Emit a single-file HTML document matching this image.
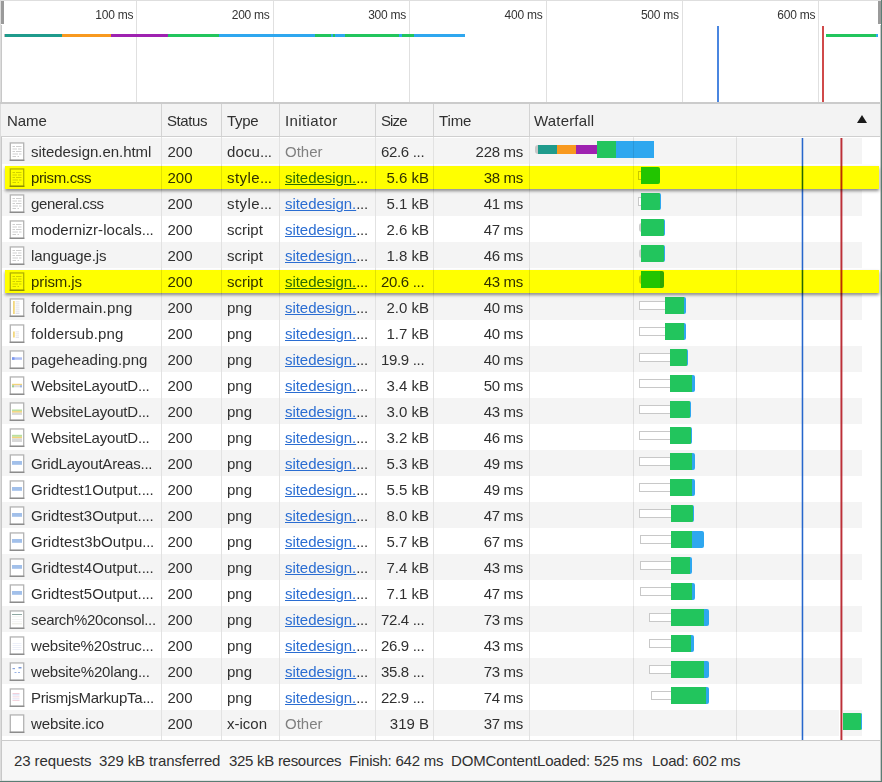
<!DOCTYPE html>
<html><head><meta charset="utf-8"><style>
*{box-sizing:border-box;margin:0;padding:0}
html,body{width:882px;height:782px;overflow:hidden;background:#fff}
body{position:relative;font-family:"Liberation Sans",sans-serif;color:#303030;}
.a{position:absolute}
.t{position:absolute;white-space:nowrap;font-size:15px;line-height:18px}
.tk{position:absolute;white-space:nowrap;font-size:12px;line-height:14px;color:#333;text-align:right;letter-spacing:-0.25px}
.lnk{color:#2a6dd2;text-decoration:underline;text-underline-offset:1px}
.oth{color:#808080}
.ic{position:absolute;width:16px;height:20px}
.hl{position:absolute;background:#ffff00;mix-blend-mode:multiply;box-shadow:0 2px 3px rgba(0,0,0,.45)}
</style></head><body>

<div class="a" style="left:0;top:0;width:882px;height:1px;background:#dedede"></div>
<div class="a" style="left:0;top:0;width:1px;height:782px;background:#dcdcdc"></div>
<div class="a" style="left:1px;top:25px;width:1px;height:757px;background:#c8c8c8"></div>
<div class="a" style="left:1px;top:1px;width:3px;height:23px;background:#9a9a9a"></div>
<div class="a" style="left:878px;top:1px;width:3px;height:23px;background:#9a9a9a"></div>
<div class="a" style="left:880px;top:25px;width:1px;height:757px;background:#c8c8c8"></div>
<div class="a" style="left:881px;top:0;width:1px;height:782px;background:#5b7d74"></div>
<div class="a" style="left:136.4px;top:1px;width:1px;height:101px;background:#e0e0e0"></div>
<div class="tk" style="left:76.4px;top:8px;width:56.8px">100 ms</div>
<div class="a" style="left:272.8px;top:1px;width:1px;height:101px;background:#e0e0e0"></div>
<div class="tk" style="left:212.8px;top:8px;width:56.8px">200 ms</div>
<div class="a" style="left:409.2px;top:1px;width:1px;height:101px;background:#e0e0e0"></div>
<div class="tk" style="left:349.2px;top:8px;width:56.8px">300 ms</div>
<div class="a" style="left:545.6px;top:1px;width:1px;height:101px;background:#e0e0e0"></div>
<div class="tk" style="left:485.6px;top:8px;width:56.8px">400 ms</div>
<div class="a" style="left:682.0px;top:1px;width:1px;height:101px;background:#e0e0e0"></div>
<div class="tk" style="left:622.0px;top:8px;width:56.8px">500 ms</div>
<div class="a" style="left:818.4px;top:1px;width:1px;height:101px;background:#e0e0e0"></div>
<div class="tk" style="left:758.4px;top:8px;width:56.8px">600 ms</div>
<div class="a" style="left:4px;top:34px;width:1px;height:3px;background:#bbb"></div>
<div class="a" style="left:5px;top:34px;width:57px;height:3px;background:#1f9b8c"></div>
<div class="a" style="left:62px;top:34px;width:49px;height:3px;background:#f8991f"></div>
<div class="a" style="left:111px;top:34px;width:57px;height:3px;background:#9e22b0"></div>
<div class="a" style="left:168px;top:34px;width:51px;height:3px;background:#22c55d"></div>
<div class="a" style="left:219px;top:34px;width:96px;height:3px;background:#2ea7ef"></div>
<div class="a" style="left:315px;top:34px;width:16px;height:3px;background:#22c55d"></div>
<div class="a" style="left:331px;top:34px;width:2px;height:3px;background:#2ea7ef"></div>
<div class="a" style="left:333px;top:34px;width:2px;height:3px;background:#22c55d"></div>
<div class="a" style="left:335px;top:34px;width:10px;height:3px;background:#2ea7ef"></div>
<div class="a" style="left:345px;top:34px;width:54px;height:3px;background:#22c55d"></div>
<div class="a" style="left:399px;top:34px;width:3px;height:3px;background:#2ea7ef"></div>
<div class="a" style="left:402px;top:34px;width:12px;height:3px;background:#22c55d"></div>
<div class="a" style="left:414px;top:34px;width:51px;height:3px;background:#2ea7ef"></div>
<div class="a" style="left:826px;top:34px;width:50px;height:3px;background:#22c55d"></div>
<div class="a" style="left:876px;top:34px;width:2px;height:3px;background:#2ea7ef"></div>
<div class="a" style="left:717px;top:26px;width:2px;height:76px;background:#4a86e0"></div>
<div class="a" style="left:822px;top:26px;width:2px;height:76px;background:#d04a4a"></div>
<div class="a" style="left:0;top:102px;width:881px;height:2px;background:#cbcbcb"></div>
<div class="a" style="left:1px;top:104px;width:879px;height:32px;background:#f3f3f3"></div>
<div class="a" style="left:1px;top:136px;width:879px;height:1px;background:#cfcfcf"></div>
<div class="t" style="left:7px;top:112px;letter-spacing:-0.039px;">Name</div>
<div class="t" style="left:167px;top:112px;letter-spacing:-0.406px;">Status</div>
<div class="t" style="left:227px;top:112px;letter-spacing:-0.339px;">Type</div>
<div class="t" style="left:285px;top:112px;letter-spacing:0.375px;">Initiator</div>
<div class="t" style="left:381px;top:112px;letter-spacing:-0.891px;">Size</div>
<div class="t" style="left:439px;top:112px;letter-spacing:-0.122px;">Time</div>
<div class="t" style="left:534px;top:112px;letter-spacing:0.172px;">Waterfall</div>
<svg class="a" style="left:856px;top:114px" width="12" height="10"><path d="M1 9 L6 1 L11 9 Z" fill="#1a1a1a"/></svg>
<div class="a" style="left:2px;top:137px;width:878px;height:603px;background:#fff"></div>
<div class="a" style="left:2px;top:138px;width:860px;height:26px;background:#f4f4f4"></div>
<div class="a" style="left:2px;top:190px;width:860px;height:26px;background:#f4f4f4"></div>
<div class="a" style="left:2px;top:242px;width:860px;height:26px;background:#f4f4f4"></div>
<div class="a" style="left:2px;top:294px;width:860px;height:26px;background:#f4f4f4"></div>
<div class="a" style="left:2px;top:346px;width:860px;height:26px;background:#f4f4f4"></div>
<div class="a" style="left:2px;top:398px;width:860px;height:26px;background:#f4f4f4"></div>
<div class="a" style="left:2px;top:450px;width:860px;height:26px;background:#f4f4f4"></div>
<div class="a" style="left:2px;top:502px;width:860px;height:26px;background:#f4f4f4"></div>
<div class="a" style="left:2px;top:554px;width:860px;height:26px;background:#f4f4f4"></div>
<div class="a" style="left:2px;top:606px;width:860px;height:26px;background:#f4f4f4"></div>
<div class="a" style="left:2px;top:658px;width:860px;height:26px;background:#f4f4f4"></div>
<div class="a" style="left:2px;top:710px;width:860px;height:26px;background:#f4f4f4"></div>
<div class="a" style="left:161px;top:104px;width:1px;height:32px;background:#d3d3d3"></div>
<div class="a" style="left:161px;top:137px;width:1px;height:603px;background:#e2e2e2"></div>
<div class="a" style="left:221px;top:104px;width:1px;height:32px;background:#d3d3d3"></div>
<div class="a" style="left:221px;top:137px;width:1px;height:603px;background:#e2e2e2"></div>
<div class="a" style="left:279px;top:104px;width:1px;height:32px;background:#d3d3d3"></div>
<div class="a" style="left:279px;top:137px;width:1px;height:603px;background:#e2e2e2"></div>
<div class="a" style="left:375px;top:104px;width:1px;height:32px;background:#d3d3d3"></div>
<div class="a" style="left:375px;top:137px;width:1px;height:603px;background:#e2e2e2"></div>
<div class="a" style="left:433px;top:104px;width:1px;height:32px;background:#d3d3d3"></div>
<div class="a" style="left:433px;top:137px;width:1px;height:603px;background:#e2e2e2"></div>
<div class="a" style="left:529px;top:104px;width:1px;height:32px;background:#d3d3d3"></div>
<div class="a" style="left:529px;top:137px;width:1px;height:603px;background:#e2e2e2"></div>
<svg class="ic" style="left:9px;top:142px" width="16" height="20"><rect x="1.3" y="0.95" width="13.4" height="17.4" fill="#fff" stroke="#b3b3b3" stroke-width="1.3"/><rect x="0.65" y="17.6" width="14.7" height="1.3" fill="#888"/><rect x="3.5" y="4" width="2.5" height="1" fill="#cfcfcf"/><rect x="7" y="4" width="5.5" height="1" fill="#cfcfcf"/><rect x="3.5" y="6.5" width="4.5" height="1" fill="#cfcfcf"/><rect x="9" y="6.5" width="3.5" height="1" fill="#cfcfcf"/><rect x="3.5" y="9" width="2.5" height="1" fill="#cfcfcf"/><rect x="7" y="9" width="5.5" height="1" fill="#cfcfcf"/><rect x="3.5" y="11.5" width="5.5" height="1" fill="#cfcfcf"/><rect x="10" y="11.5" width="2.5" height="1" fill="#cfcfcf"/><rect x="3.5" y="14" width="3.5" height="1" fill="#cfcfcf"/><rect x="8.5" y="14" width="1.5" height="1" fill="#cfcfcf"/></svg>
<div class="t" style="left:31px;top:143px;"><span style="letter-spacing:-0.029px;">sitedesign.en.html</span></div>
<div class="t" style="left:167.5px;top:143px">200</div>
<div class="t" style="left:227px;top:143px;"><span style="letter-spacing:0.138px;">docu</span><span style="letter-spacing:-0.3px">...</span></div>
<div class="t oth" style="left:285px;top:143px">Other</div>
<div class="t" style="left:381px;top:143px;"><span style="letter-spacing:-0.338px;">62.6 </span><span style="letter-spacing:-0.3px">...</span></div>
<div class="t" style="left:433px;top:143px;width:90px;text-align:right;letter-spacing:-0.3px">228 ms</div>
<div class="a" style="left:535px;top:145px;width:5px;height:9px;background:#c8c8c8;border-radius:3px 0 0 3px"></div>
<div class="a" style="left:538px;top:145px;width:19px;height:9px;background:#1f9b8c"></div>
<div class="a" style="left:557px;top:145px;width:19px;height:9px;background:#f8991f"></div>
<div class="a" style="left:576px;top:145px;width:21px;height:9px;background:#9e22b0"></div>
<div class="a" style="left:597px;top:141px;width:57px;height:17px;border-radius:0;overflow:hidden"><div class="a" style="left:0px;top:0;width:19px;height:17px;background:#22c55d"></div><div class="a" style="left:19px;top:0;width:38px;height:17px;background:#2ea7ef"></div></div>
<svg class="ic" style="left:9px;top:168px" width="16" height="20"><rect x="1.3" y="0.95" width="13.4" height="17.4" fill="#fff" stroke="#b3b3b3" stroke-width="1.3"/><rect x="0.65" y="17.6" width="14.7" height="1.3" fill="#888"/><rect x="3.5" y="4" width="2.5" height="1" fill="#cfcfcf"/><rect x="7" y="4" width="5.5" height="1" fill="#cfcfcf"/><rect x="3.5" y="6.5" width="4.5" height="1" fill="#cfcfcf"/><rect x="9" y="6.5" width="3.5" height="1" fill="#cfcfcf"/><rect x="3.5" y="9" width="2.5" height="1" fill="#cfcfcf"/><rect x="7" y="9" width="5.5" height="1" fill="#cfcfcf"/><rect x="3.5" y="11.5" width="5.5" height="1" fill="#cfcfcf"/><rect x="10" y="11.5" width="2.5" height="1" fill="#cfcfcf"/><rect x="3.5" y="14" width="3.5" height="1" fill="#cfcfcf"/><rect x="8.5" y="14" width="1.5" height="1" fill="#cfcfcf"/></svg>
<div class="t" style="left:31px;top:169px;"><span style="letter-spacing:-0.360px;">prism.css</span></div>
<div class="t" style="left:167.5px;top:169px">200</div>
<div class="t" style="left:227px;top:169px;"><span style="letter-spacing:0.448px;">style</span><span style="letter-spacing:-0.3px">...</span></div>
<div class="t" style="left:285px;top:169px;"><span class="lnk" style="letter-spacing:-0.05px">sitedesign.</span><span style="letter-spacing:-0.3px">...</span></div>
<div class="t" style="left:375px;top:169px;width:54px;text-align:right">5.6 kB</div>
<div class="t" style="left:433px;top:169px;width:90px;text-align:right;letter-spacing:-0.3px">38 ms</div>
<div class="a" style="left:638px;top:171px;width:4px;height:9px;background:#fff;border:1px solid #c8c8c8;"></div>
<div class="a" style="left:641px;top:167px;width:19px;height:17px;border-radius:0 2px 2px 0;overflow:hidden"><div class="a" style="left:0px;top:0;width:19px;height:17px;background:#22c55d"></div></div>
<svg class="ic" style="left:9px;top:194px" width="16" height="20"><rect x="1.3" y="0.95" width="13.4" height="17.4" fill="#fff" stroke="#b3b3b3" stroke-width="1.3"/><rect x="0.65" y="17.6" width="14.7" height="1.3" fill="#888"/><rect x="3.5" y="4" width="2.5" height="1" fill="#cfcfcf"/><rect x="7" y="4" width="5.5" height="1" fill="#cfcfcf"/><rect x="3.5" y="6.5" width="4.5" height="1" fill="#cfcfcf"/><rect x="9" y="6.5" width="3.5" height="1" fill="#cfcfcf"/><rect x="3.5" y="9" width="2.5" height="1" fill="#cfcfcf"/><rect x="7" y="9" width="5.5" height="1" fill="#cfcfcf"/><rect x="3.5" y="11.5" width="5.5" height="1" fill="#cfcfcf"/><rect x="10" y="11.5" width="2.5" height="1" fill="#cfcfcf"/><rect x="3.5" y="14" width="3.5" height="1" fill="#cfcfcf"/><rect x="8.5" y="14" width="1.5" height="1" fill="#cfcfcf"/></svg>
<div class="t" style="left:31px;top:195px;"><span style="letter-spacing:-0.365px;">general.css</span></div>
<div class="t" style="left:167.5px;top:195px">200</div>
<div class="t" style="left:227px;top:195px;"><span style="letter-spacing:0.448px;">style</span><span style="letter-spacing:-0.3px">...</span></div>
<div class="t" style="left:285px;top:195px;"><span class="lnk" style="letter-spacing:-0.05px">sitedesign.</span><span style="letter-spacing:-0.3px">...</span></div>
<div class="t" style="left:375px;top:195px;width:54px;text-align:right">5.1 kB</div>
<div class="t" style="left:433px;top:195px;width:90px;text-align:right;letter-spacing:-0.3px">41 ms</div>
<div class="a" style="left:638px;top:197px;width:4px;height:9px;background:#fff;border:1px solid #c8c8c8;"></div>
<div class="a" style="left:641px;top:193px;width:20px;height:17px;border-radius:0 2px 2px 0;overflow:hidden"><div class="a" style="left:0px;top:0;width:19px;height:17px;background:#22c55d"></div><div class="a" style="left:19px;top:0;width:1px;height:17px;background:#2ea7ef"></div></div>
<svg class="ic" style="left:9px;top:220px" width="16" height="20"><rect x="1.3" y="0.95" width="13.4" height="17.4" fill="#fff" stroke="#b3b3b3" stroke-width="1.3"/><rect x="0.65" y="17.6" width="14.7" height="1.3" fill="#888"/><rect x="3.5" y="4" width="2.5" height="1" fill="#cfcfcf"/><rect x="7" y="4" width="5.5" height="1" fill="#cfcfcf"/><rect x="3.5" y="6.5" width="4.5" height="1" fill="#cfcfcf"/><rect x="9" y="6.5" width="3.5" height="1" fill="#cfcfcf"/><rect x="3.5" y="9" width="2.5" height="1" fill="#cfcfcf"/><rect x="7" y="9" width="5.5" height="1" fill="#cfcfcf"/><rect x="3.5" y="11.5" width="5.5" height="1" fill="#cfcfcf"/><rect x="10" y="11.5" width="2.5" height="1" fill="#cfcfcf"/><rect x="3.5" y="14" width="3.5" height="1" fill="#cfcfcf"/><rect x="8.5" y="14" width="1.5" height="1" fill="#cfcfcf"/></svg>
<div class="t" style="left:31px;top:221px;"><span style="letter-spacing:0.046px;">modernizr-locals</span><span style="letter-spacing:-0.3px">...</span></div>
<div class="t" style="left:167.5px;top:221px">200</div>
<div class="t" style="left:227px;top:221px;"><span style="">script</span></div>
<div class="t" style="left:285px;top:221px;"><span class="lnk" style="letter-spacing:-0.05px">sitedesign.</span><span style="letter-spacing:-0.3px">...</span></div>
<div class="t" style="left:375px;top:221px;width:54px;text-align:right">2.6 kB</div>
<div class="t" style="left:433px;top:221px;width:90px;text-align:right;letter-spacing:-0.3px">47 ms</div>
<div class="a" style="left:639px;top:223px;width:4px;height:9px;background:#ccc;border-radius:3px 0 0 3px"></div>
<div class="a" style="left:641px;top:219px;width:24px;height:17px;border-radius:0 2px 2px 0;overflow:hidden"><div class="a" style="left:0px;top:0;width:23px;height:17px;background:#22c55d"></div><div class="a" style="left:23px;top:0;width:1px;height:17px;background:#2ea7ef"></div></div>
<svg class="ic" style="left:9px;top:246px" width="16" height="20"><rect x="1.3" y="0.95" width="13.4" height="17.4" fill="#fff" stroke="#b3b3b3" stroke-width="1.3"/><rect x="0.65" y="17.6" width="14.7" height="1.3" fill="#888"/><rect x="3.5" y="4" width="2.5" height="1" fill="#cfcfcf"/><rect x="7" y="4" width="5.5" height="1" fill="#cfcfcf"/><rect x="3.5" y="6.5" width="4.5" height="1" fill="#cfcfcf"/><rect x="9" y="6.5" width="3.5" height="1" fill="#cfcfcf"/><rect x="3.5" y="9" width="2.5" height="1" fill="#cfcfcf"/><rect x="7" y="9" width="5.5" height="1" fill="#cfcfcf"/><rect x="3.5" y="11.5" width="5.5" height="1" fill="#cfcfcf"/><rect x="10" y="11.5" width="2.5" height="1" fill="#cfcfcf"/><rect x="3.5" y="14" width="3.5" height="1" fill="#cfcfcf"/><rect x="8.5" y="14" width="1.5" height="1" fill="#cfcfcf"/></svg>
<div class="t" style="left:31px;top:247px;"><span style="letter-spacing:-0.121px;">language.js</span></div>
<div class="t" style="left:167.5px;top:247px">200</div>
<div class="t" style="left:227px;top:247px;"><span style="">script</span></div>
<div class="t" style="left:285px;top:247px;"><span class="lnk" style="letter-spacing:-0.05px">sitedesign.</span><span style="letter-spacing:-0.3px">...</span></div>
<div class="t" style="left:375px;top:247px;width:54px;text-align:right">1.8 kB</div>
<div class="t" style="left:433px;top:247px;width:90px;text-align:right;letter-spacing:-0.3px">46 ms</div>
<div class="a" style="left:639px;top:249px;width:4px;height:9px;background:#ccc;border-radius:3px 0 0 3px"></div>
<div class="a" style="left:641px;top:245px;width:24px;height:17px;border-radius:0 2px 2px 0;overflow:hidden"><div class="a" style="left:0px;top:0;width:23px;height:17px;background:#22c55d"></div><div class="a" style="left:23px;top:0;width:1px;height:17px;background:#2ea7ef"></div></div>
<svg class="ic" style="left:9px;top:272px" width="16" height="20"><rect x="1.3" y="0.95" width="13.4" height="17.4" fill="#fff" stroke="#b3b3b3" stroke-width="1.3"/><rect x="0.65" y="17.6" width="14.7" height="1.3" fill="#888"/><rect x="3.5" y="4" width="2.5" height="1" fill="#cfcfcf"/><rect x="7" y="4" width="5.5" height="1" fill="#cfcfcf"/><rect x="3.5" y="6.5" width="4.5" height="1" fill="#cfcfcf"/><rect x="9" y="6.5" width="3.5" height="1" fill="#cfcfcf"/><rect x="3.5" y="9" width="2.5" height="1" fill="#cfcfcf"/><rect x="7" y="9" width="5.5" height="1" fill="#cfcfcf"/><rect x="3.5" y="11.5" width="5.5" height="1" fill="#cfcfcf"/><rect x="10" y="11.5" width="2.5" height="1" fill="#cfcfcf"/><rect x="3.5" y="14" width="3.5" height="1" fill="#cfcfcf"/><rect x="8.5" y="14" width="1.5" height="1" fill="#cfcfcf"/></svg>
<div class="t" style="left:31px;top:273px;"><span style="letter-spacing:-0.084px;">prism.js</span></div>
<div class="t" style="left:167.5px;top:273px">200</div>
<div class="t" style="left:227px;top:273px;"><span style="">script</span></div>
<div class="t" style="left:285px;top:273px;"><span class="lnk" style="letter-spacing:-0.05px">sitedesign.</span><span style="letter-spacing:-0.3px">...</span></div>
<div class="t" style="left:381px;top:273px;"><span style="letter-spacing:-0.338px;">20.6 </span><span style="letter-spacing:-0.3px">...</span></div>
<div class="t" style="left:433px;top:273px;width:90px;text-align:right;letter-spacing:-0.3px">43 ms</div>
<div class="a" style="left:639px;top:275px;width:4px;height:9px;background:#ccc;border-radius:3px 0 0 3px"></div>
<div class="a" style="left:641px;top:271px;width:23px;height:17px;border-radius:0 2px 2px 0;overflow:hidden"><div class="a" style="left:0px;top:0;width:19px;height:17px;background:#22c55d"></div><div class="a" style="left:19px;top:0;width:4px;height:17px;background:#2ea7ef"></div></div>
<svg class="ic" style="left:9px;top:298px" width="16" height="20"><rect x="1.3" y="0.95" width="13.4" height="17.4" fill="#fff" stroke="#b3b3b3" stroke-width="1.3"/><rect x="0.65" y="17.6" width="14.7" height="1.3" fill="#888"/><rect x="4" y="3" width="1.8" height="13" fill="#f3d77f"/><rect x="6.5" y="3.5" width="4" height="0.8" fill="#d8d8e0"/><rect x="6.5" y="5.5" width="4" height="0.8" fill="#d8d8e0"/><rect x="6.5" y="7.5" width="4" height="0.8" fill="#d8d8e0"/><rect x="6.5" y="9.5" width="4" height="0.8" fill="#d8d8e0"/><rect x="6.5" y="11.5" width="4" height="0.8" fill="#d8d8e0"/><rect x="6.5" y="13.5" width="4" height="0.8" fill="#d8d8e0"/><rect x="6.5" y="15" width="4" height="0.8" fill="#d8d8e0"/></svg>
<div class="t" style="left:31px;top:299px;"><span style="letter-spacing:0.154px;">foldermain.png</span></div>
<div class="t" style="left:167.5px;top:299px">200</div>
<div class="t" style="left:227px;top:299px;"><span style="">png</span></div>
<div class="t" style="left:285px;top:299px;"><span class="lnk" style="letter-spacing:-0.05px">sitedesign.</span><span style="letter-spacing:-0.3px">...</span></div>
<div class="t" style="left:375px;top:299px;width:54px;text-align:right">2.0 kB</div>
<div class="t" style="left:433px;top:299px;width:90px;text-align:right;letter-spacing:-0.3px">40 ms</div>
<div class="a" style="left:639px;top:301px;width:27px;height:9px;background:#fff;border:1px solid #c8c8c8;"></div>
<div class="a" style="left:665px;top:297px;width:21px;height:17px;border-radius:0 2px 2px 0;overflow:hidden"><div class="a" style="left:0px;top:0;width:19px;height:17px;background:#22c55d"></div><div class="a" style="left:19px;top:0;width:2px;height:17px;background:#2ea7ef"></div></div>
<svg class="ic" style="left:9px;top:324px" width="16" height="20"><rect x="1.3" y="0.95" width="13.4" height="17.4" fill="#fff" stroke="#b3b3b3" stroke-width="1.3"/><rect x="0.65" y="17.6" width="14.7" height="1.3" fill="#888"/><rect x="4" y="7.5" width="1.8" height="6" fill="#f3d77f"/><rect x="6.5" y="7.5" width="3.5" height="0.8" fill="#dcdce4"/><rect x="6.5" y="9.5" width="3.5" height="0.8" fill="#dcdce4"/><rect x="6.5" y="11.5" width="3.5" height="0.8" fill="#dcdce4"/><rect x="6.5" y="13" width="3.5" height="0.8" fill="#dcdce4"/></svg>
<div class="t" style="left:31px;top:325px;"><span style="letter-spacing:0.121px;">foldersub.png</span></div>
<div class="t" style="left:167.5px;top:325px">200</div>
<div class="t" style="left:227px;top:325px;"><span style="">png</span></div>
<div class="t" style="left:285px;top:325px;"><span class="lnk" style="letter-spacing:-0.05px">sitedesign.</span><span style="letter-spacing:-0.3px">...</span></div>
<div class="t" style="left:375px;top:325px;width:54px;text-align:right">1.7 kB</div>
<div class="t" style="left:433px;top:325px;width:90px;text-align:right;letter-spacing:-0.3px">40 ms</div>
<div class="a" style="left:639px;top:327px;width:27px;height:9px;background:#fff;border:1px solid #c8c8c8;"></div>
<div class="a" style="left:665px;top:323px;width:21px;height:17px;border-radius:0 2px 2px 0;overflow:hidden"><div class="a" style="left:0px;top:0;width:19px;height:17px;background:#22c55d"></div><div class="a" style="left:19px;top:0;width:2px;height:17px;background:#2ea7ef"></div></div>
<svg class="ic" style="left:9px;top:350px" width="16" height="20"><rect x="1.3" y="0.95" width="13.4" height="17.4" fill="#fff" stroke="#b3b3b3" stroke-width="1.3"/><rect x="0.65" y="17.6" width="14.7" height="1.3" fill="#888"/><rect x="3" y="7.3" width="10" height="2.5" fill="#b0c0f4"/><rect x="3" y="7.3" width="2.5" height="2.5" fill="#7b96ee"/></svg>
<div class="t" style="left:31px;top:351px;"><span style="letter-spacing:0.029px;">pageheading.png</span></div>
<div class="t" style="left:167.5px;top:351px">200</div>
<div class="t" style="left:227px;top:351px;"><span style="">png</span></div>
<div class="t" style="left:285px;top:351px;"><span class="lnk" style="letter-spacing:-0.05px">sitedesign.</span><span style="letter-spacing:-0.3px">...</span></div>
<div class="t" style="left:381px;top:351px;"><span style="letter-spacing:-0.338px;">19.9 </span><span style="letter-spacing:-0.3px">...</span></div>
<div class="t" style="left:433px;top:351px;width:90px;text-align:right;letter-spacing:-0.3px">40 ms</div>
<div class="a" style="left:639px;top:353px;width:32px;height:9px;background:#fff;border:1px solid #c8c8c8;"></div>
<div class="a" style="left:670px;top:349px;width:18px;height:17px;border-radius:0 2px 2px 0;overflow:hidden"><div class="a" style="left:0px;top:0;width:17px;height:17px;background:#22c55d"></div><div class="a" style="left:17px;top:0;width:1px;height:17px;background:#2ea7ef"></div></div>
<svg class="ic" style="left:9px;top:376px" width="16" height="20"><rect x="1.3" y="0.95" width="13.4" height="17.4" fill="#fff" stroke="#b3b3b3" stroke-width="1.3"/><rect x="0.65" y="17.6" width="14.7" height="1.3" fill="#888"/><rect x="3" y="7.8" width="10" height="1.5" fill="#f3d37a"/><rect x="3" y="9.3" width="10" height="2" fill="#dcdcdc"/><rect x="3" y="9.3" width="2" height="2" fill="#9fd08f"/><rect x="11" y="9.3" width="2" height="2" fill="#9fb8e6"/></svg>
<div class="t" style="left:31px;top:377px;"><span style="letter-spacing:-0.208px;">WebsiteLayoutD</span><span style="letter-spacing:-0.3px">...</span></div>
<div class="t" style="left:167.5px;top:377px">200</div>
<div class="t" style="left:227px;top:377px;"><span style="">png</span></div>
<div class="t" style="left:285px;top:377px;"><span class="lnk" style="letter-spacing:-0.05px">sitedesign.</span><span style="letter-spacing:-0.3px">...</span></div>
<div class="t" style="left:375px;top:377px;width:54px;text-align:right">3.4 kB</div>
<div class="t" style="left:433px;top:377px;width:90px;text-align:right;letter-spacing:-0.3px">50 ms</div>
<div class="a" style="left:639px;top:379px;width:32px;height:9px;background:#fff;border:1px solid #c8c8c8;"></div>
<div class="a" style="left:670px;top:375px;width:25px;height:17px;border-radius:0 2px 2px 0;overflow:hidden"><div class="a" style="left:0px;top:0;width:22px;height:17px;background:#22c55d"></div><div class="a" style="left:22px;top:0;width:3px;height:17px;background:#2ea7ef"></div></div>
<svg class="ic" style="left:9px;top:402px" width="16" height="20"><rect x="1.3" y="0.95" width="13.4" height="17.4" fill="#fff" stroke="#b3b3b3" stroke-width="1.3"/><rect x="0.65" y="17.6" width="14.7" height="1.3" fill="#888"/><rect x="3" y="7.5" width="10" height="1.6" fill="#b8e0a0"/><rect x="3" y="9.1" width="10" height="1.6" fill="#f3d37a"/><rect x="3" y="10.7" width="10" height="2.2" fill="#d8d8d8"/></svg>
<div class="t" style="left:31px;top:403px;"><span style="letter-spacing:-0.208px;">WebsiteLayoutD</span><span style="letter-spacing:-0.3px">...</span></div>
<div class="t" style="left:167.5px;top:403px">200</div>
<div class="t" style="left:227px;top:403px;"><span style="">png</span></div>
<div class="t" style="left:285px;top:403px;"><span class="lnk" style="letter-spacing:-0.05px">sitedesign.</span><span style="letter-spacing:-0.3px">...</span></div>
<div class="t" style="left:375px;top:403px;width:54px;text-align:right">3.0 kB</div>
<div class="t" style="left:433px;top:403px;width:90px;text-align:right;letter-spacing:-0.3px">43 ms</div>
<div class="a" style="left:639px;top:405px;width:32px;height:9px;background:#fff;border:1px solid #c8c8c8;"></div>
<div class="a" style="left:670px;top:401px;width:21px;height:17px;border-radius:0 2px 2px 0;overflow:hidden"><div class="a" style="left:0px;top:0;width:20px;height:17px;background:#22c55d"></div><div class="a" style="left:20px;top:0;width:1px;height:17px;background:#2ea7ef"></div></div>
<svg class="ic" style="left:9px;top:428px" width="16" height="20"><rect x="1.3" y="0.95" width="13.4" height="17.4" fill="#fff" stroke="#b3b3b3" stroke-width="1.3"/><rect x="0.65" y="17.6" width="14.7" height="1.3" fill="#888"/><rect x="3" y="6.8" width="10" height="2" fill="#b8e0a0"/><rect x="3" y="8.8" width="10" height="1.6" fill="#f3d37a"/><rect x="3" y="10.4" width="10" height="3.6" fill="#d8d8d8"/></svg>
<div class="t" style="left:31px;top:429px;"><span style="letter-spacing:-0.208px;">WebsiteLayoutD</span><span style="letter-spacing:-0.3px">...</span></div>
<div class="t" style="left:167.5px;top:429px">200</div>
<div class="t" style="left:227px;top:429px;"><span style="">png</span></div>
<div class="t" style="left:285px;top:429px;"><span class="lnk" style="letter-spacing:-0.05px">sitedesign.</span><span style="letter-spacing:-0.3px">...</span></div>
<div class="t" style="left:375px;top:429px;width:54px;text-align:right">3.2 kB</div>
<div class="t" style="left:433px;top:429px;width:90px;text-align:right;letter-spacing:-0.3px">46 ms</div>
<div class="a" style="left:639px;top:431px;width:32px;height:9px;background:#fff;border:1px solid #c8c8c8;"></div>
<div class="a" style="left:670px;top:427px;width:22px;height:17px;border-radius:0 2px 2px 0;overflow:hidden"><div class="a" style="left:0px;top:0;width:21px;height:17px;background:#22c55d"></div><div class="a" style="left:21px;top:0;width:1px;height:17px;background:#2ea7ef"></div></div>
<svg class="ic" style="left:9px;top:454px" width="16" height="20"><rect x="1.3" y="0.95" width="13.4" height="17.4" fill="#fff" stroke="#b3b3b3" stroke-width="1.3"/><rect x="0.65" y="17.6" width="14.7" height="1.3" fill="#888"/><rect x="3" y="7" width="10" height="3.8" fill="#a2c0ea"/></svg>
<div class="t" style="left:31px;top:455px;"><span style="letter-spacing:-0.200px;">GridLayoutAreas</span><span style="letter-spacing:-0.3px">...</span></div>
<div class="t" style="left:167.5px;top:455px">200</div>
<div class="t" style="left:227px;top:455px;"><span style="">png</span></div>
<div class="t" style="left:285px;top:455px;"><span class="lnk" style="letter-spacing:-0.05px">sitedesign.</span><span style="letter-spacing:-0.3px">...</span></div>
<div class="t" style="left:375px;top:455px;width:54px;text-align:right">5.3 kB</div>
<div class="t" style="left:433px;top:455px;width:90px;text-align:right;letter-spacing:-0.3px">49 ms</div>
<div class="a" style="left:639px;top:457px;width:32px;height:9px;background:#fff;border:1px solid #c8c8c8;"></div>
<div class="a" style="left:670px;top:453px;width:25px;height:17px;border-radius:0 2px 2px 0;overflow:hidden"><div class="a" style="left:0px;top:0;width:22px;height:17px;background:#22c55d"></div><div class="a" style="left:22px;top:0;width:3px;height:17px;background:#2ea7ef"></div></div>
<svg class="ic" style="left:9px;top:480px" width="16" height="20"><rect x="1.3" y="0.95" width="13.4" height="17.4" fill="#fff" stroke="#b3b3b3" stroke-width="1.3"/><rect x="0.65" y="17.6" width="14.7" height="1.3" fill="#888"/><rect x="3" y="7" width="10" height="3.8" fill="#a2c0ea"/></svg>
<div class="t" style="left:31px;top:481px;"><span style="letter-spacing:0.037px;">Gridtest1Output.</span><span style="letter-spacing:-0.3px">...</span></div>
<div class="t" style="left:167.5px;top:481px">200</div>
<div class="t" style="left:227px;top:481px;"><span style="">png</span></div>
<div class="t" style="left:285px;top:481px;"><span class="lnk" style="letter-spacing:-0.05px">sitedesign.</span><span style="letter-spacing:-0.3px">...</span></div>
<div class="t" style="left:375px;top:481px;width:54px;text-align:right">5.5 kB</div>
<div class="t" style="left:433px;top:481px;width:90px;text-align:right;letter-spacing:-0.3px">49 ms</div>
<div class="a" style="left:639px;top:483px;width:32px;height:9px;background:#fff;border:1px solid #c8c8c8;"></div>
<div class="a" style="left:670px;top:479px;width:25px;height:17px;border-radius:0 2px 2px 0;overflow:hidden"><div class="a" style="left:0px;top:0;width:22px;height:17px;background:#22c55d"></div><div class="a" style="left:22px;top:0;width:3px;height:17px;background:#2ea7ef"></div></div>
<svg class="ic" style="left:9px;top:506px" width="16" height="20"><rect x="1.3" y="0.95" width="13.4" height="17.4" fill="#fff" stroke="#b3b3b3" stroke-width="1.3"/><rect x="0.65" y="17.6" width="14.7" height="1.3" fill="#888"/><rect x="3" y="7" width="10" height="3.8" fill="#a2c0ea"/></svg>
<div class="t" style="left:31px;top:507px;"><span style="letter-spacing:0.037px;">Gridtest3Output.</span><span style="letter-spacing:-0.3px">...</span></div>
<div class="t" style="left:167.5px;top:507px">200</div>
<div class="t" style="left:227px;top:507px;"><span style="">png</span></div>
<div class="t" style="left:285px;top:507px;"><span class="lnk" style="letter-spacing:-0.05px">sitedesign.</span><span style="letter-spacing:-0.3px">...</span></div>
<div class="t" style="left:375px;top:507px;width:54px;text-align:right">8.0 kB</div>
<div class="t" style="left:433px;top:507px;width:90px;text-align:right;letter-spacing:-0.3px">47 ms</div>
<div class="a" style="left:639px;top:509px;width:33px;height:9px;background:#fff;border:1px solid #c8c8c8;"></div>
<div class="a" style="left:671px;top:505px;width:23px;height:17px;border-radius:0 2px 2px 0;overflow:hidden"><div class="a" style="left:0px;top:0;width:22px;height:17px;background:#22c55d"></div><div class="a" style="left:22px;top:0;width:1px;height:17px;background:#2ea7ef"></div></div>
<svg class="ic" style="left:9px;top:532px" width="16" height="20"><rect x="1.3" y="0.95" width="13.4" height="17.4" fill="#fff" stroke="#b3b3b3" stroke-width="1.3"/><rect x="0.65" y="17.6" width="14.7" height="1.3" fill="#888"/><rect x="3" y="7" width="10" height="3.8" fill="#a2c0ea"/></svg>
<div class="t" style="left:31px;top:533px;"><span style="letter-spacing:0.086px;">Gridtest3bOutpu</span><span style="letter-spacing:-0.3px">...</span></div>
<div class="t" style="left:167.5px;top:533px">200</div>
<div class="t" style="left:227px;top:533px;"><span style="">png</span></div>
<div class="t" style="left:285px;top:533px;"><span class="lnk" style="letter-spacing:-0.05px">sitedesign.</span><span style="letter-spacing:-0.3px">...</span></div>
<div class="t" style="left:375px;top:533px;width:54px;text-align:right">5.7 kB</div>
<div class="t" style="left:433px;top:533px;width:90px;text-align:right;letter-spacing:-0.3px">67 ms</div>
<div class="a" style="left:640px;top:535px;width:32px;height:9px;background:#fff;border:1px solid #c8c8c8;"></div>
<div class="a" style="left:671px;top:531px;width:33px;height:17px;border-radius:0 2px 2px 0;overflow:hidden"><div class="a" style="left:0px;top:0;width:21px;height:17px;background:#22c55d"></div><div class="a" style="left:21px;top:0;width:12px;height:17px;background:#2ea7ef"></div></div>
<svg class="ic" style="left:9px;top:558px" width="16" height="20"><rect x="1.3" y="0.95" width="13.4" height="17.4" fill="#fff" stroke="#b3b3b3" stroke-width="1.3"/><rect x="0.65" y="17.6" width="14.7" height="1.3" fill="#888"/><rect x="3" y="7" width="10" height="3.8" fill="#a2c0ea"/></svg>
<div class="t" style="left:31px;top:559px;"><span style="letter-spacing:0.037px;">Gridtest4Output.</span><span style="letter-spacing:-0.3px">...</span></div>
<div class="t" style="left:167.5px;top:559px">200</div>
<div class="t" style="left:227px;top:559px;"><span style="">png</span></div>
<div class="t" style="left:285px;top:559px;"><span class="lnk" style="letter-spacing:-0.05px">sitedesign.</span><span style="letter-spacing:-0.3px">...</span></div>
<div class="t" style="left:375px;top:559px;width:54px;text-align:right">7.4 kB</div>
<div class="t" style="left:433px;top:559px;width:90px;text-align:right;letter-spacing:-0.3px">43 ms</div>
<div class="a" style="left:640px;top:561px;width:32px;height:9px;background:#fff;border:1px solid #c8c8c8;"></div>
<div class="a" style="left:671px;top:557px;width:21px;height:17px;border-radius:0 2px 2px 0;overflow:hidden"><div class="a" style="left:0px;top:0;width:19px;height:17px;background:#22c55d"></div><div class="a" style="left:19px;top:0;width:2px;height:17px;background:#2ea7ef"></div></div>
<svg class="ic" style="left:9px;top:584px" width="16" height="20"><rect x="1.3" y="0.95" width="13.4" height="17.4" fill="#fff" stroke="#b3b3b3" stroke-width="1.3"/><rect x="0.65" y="17.6" width="14.7" height="1.3" fill="#888"/><rect x="3" y="7" width="10" height="3.8" fill="#a2c0ea"/></svg>
<div class="t" style="left:31px;top:585px;"><span style="letter-spacing:0.037px;">Gridtest5Output.</span><span style="letter-spacing:-0.3px">...</span></div>
<div class="t" style="left:167.5px;top:585px">200</div>
<div class="t" style="left:227px;top:585px;"><span style="">png</span></div>
<div class="t" style="left:285px;top:585px;"><span class="lnk" style="letter-spacing:-0.05px">sitedesign.</span><span style="letter-spacing:-0.3px">...</span></div>
<div class="t" style="left:375px;top:585px;width:54px;text-align:right">7.1 kB</div>
<div class="t" style="left:433px;top:585px;width:90px;text-align:right;letter-spacing:-0.3px">47 ms</div>
<div class="a" style="left:640px;top:587px;width:32px;height:9px;background:#fff;border:1px solid #c8c8c8;"></div>
<div class="a" style="left:671px;top:583px;width:24px;height:17px;border-radius:0 2px 2px 0;overflow:hidden"><div class="a" style="left:0px;top:0;width:21px;height:17px;background:#22c55d"></div><div class="a" style="left:21px;top:0;width:3px;height:17px;background:#2ea7ef"></div></div>
<svg class="ic" style="left:9px;top:610px" width="16" height="20"><rect x="1.3" y="0.95" width="13.4" height="17.4" fill="#fff" stroke="#b3b3b3" stroke-width="1.3"/><rect x="0.65" y="17.6" width="14.7" height="1.3" fill="#888"/><rect x="3" y="4" width="10" height="1" fill="#8fa8a3"/><rect x="3" y="6.5" width="10" height="0.6" fill="#ececec"/><rect x="3" y="9" width="10" height="0.6" fill="#ececec"/><rect x="3" y="11.5" width="10" height="0.6" fill="#ececec"/><rect x="3" y="13.5" width="10" height="0.7" fill="#e2e2d6"/></svg>
<div class="t" style="left:31px;top:611px;"><span style="letter-spacing:-0.349px;">search%20consol</span><span style="letter-spacing:-0.3px">...</span></div>
<div class="t" style="left:167.5px;top:611px">200</div>
<div class="t" style="left:227px;top:611px;"><span style="">png</span></div>
<div class="t" style="left:285px;top:611px;"><span class="lnk" style="letter-spacing:-0.05px">sitedesign.</span><span style="letter-spacing:-0.3px">...</span></div>
<div class="t" style="left:381px;top:611px;"><span style="letter-spacing:-0.338px;">72.4 </span><span style="letter-spacing:-0.3px">...</span></div>
<div class="t" style="left:433px;top:611px;width:90px;text-align:right;letter-spacing:-0.3px">73 ms</div>
<div class="a" style="left:649px;top:613px;width:23px;height:9px;background:#fff;border:1px solid #c8c8c8;"></div>
<div class="a" style="left:671px;top:609px;width:38px;height:17px;border-radius:0 2px 2px 0;overflow:hidden"><div class="a" style="left:0px;top:0;width:33px;height:17px;background:#22c55d"></div><div class="a" style="left:33px;top:0;width:5px;height:17px;background:#2ea7ef"></div></div>
<svg class="ic" style="left:9px;top:636px" width="16" height="20"><rect x="1.3" y="0.95" width="13.4" height="17.4" fill="#fff" stroke="#b3b3b3" stroke-width="1.3"/><rect x="0.65" y="17.6" width="14.7" height="1.3" fill="#888"/><rect x="3.5" y="7" width="9" height="0.7" fill="#e6eaf6"/><rect x="3.5" y="9" width="9" height="0.7" fill="#e6eaf6"/><rect x="3.5" y="11" width="9" height="0.7" fill="#e6eaf6"/><rect x="3.5" y="13" width="9" height="0.7" fill="#e6eaf6"/></svg>
<div class="t" style="left:31px;top:637px;"><span style="letter-spacing:-0.181px;">website%20struc</span><span style="letter-spacing:-0.3px">...</span></div>
<div class="t" style="left:167.5px;top:637px">200</div>
<div class="t" style="left:227px;top:637px;"><span style="">png</span></div>
<div class="t" style="left:285px;top:637px;"><span class="lnk" style="letter-spacing:-0.05px">sitedesign.</span><span style="letter-spacing:-0.3px">...</span></div>
<div class="t" style="left:381px;top:637px;"><span style="letter-spacing:-0.338px;">26.9 </span><span style="letter-spacing:-0.3px">...</span></div>
<div class="t" style="left:433px;top:637px;width:90px;text-align:right;letter-spacing:-0.3px">43 ms</div>
<div class="a" style="left:649px;top:639px;width:23px;height:9px;background:#fff;border:1px solid #c8c8c8;"></div>
<div class="a" style="left:671px;top:635px;width:23px;height:17px;border-radius:0 2px 2px 0;overflow:hidden"><div class="a" style="left:0px;top:0;width:20px;height:17px;background:#22c55d"></div><div class="a" style="left:20px;top:0;width:3px;height:17px;background:#2ea7ef"></div></div>
<svg class="ic" style="left:9px;top:662px" width="16" height="20"><rect x="1.3" y="0.95" width="13.4" height="17.4" fill="#fff" stroke="#b3b3b3" stroke-width="1.3"/><rect x="0.65" y="17.6" width="14.7" height="1.3" fill="#888"/><rect x="3.5" y="6" width="2.5" height="1.2" fill="#8aa6e0"/><rect x="9.5" y="5" width="3" height="1.5" fill="#7c9ad8"/><rect x="5.5" y="10" width="2" height="1" fill="#9ab2e4"/><rect x="9" y="10" width="2" height="1" fill="#9ab2e4"/></svg>
<div class="t" style="left:31px;top:663px;"><span style="letter-spacing:-0.162px;">website%20lang</span><span style="letter-spacing:-0.3px">...</span></div>
<div class="t" style="left:167.5px;top:663px">200</div>
<div class="t" style="left:227px;top:663px;"><span style="">png</span></div>
<div class="t" style="left:285px;top:663px;"><span class="lnk" style="letter-spacing:-0.05px">sitedesign.</span><span style="letter-spacing:-0.3px">...</span></div>
<div class="t" style="left:381px;top:663px;"><span style="letter-spacing:-0.338px;">35.8 </span><span style="letter-spacing:-0.3px">...</span></div>
<div class="t" style="left:433px;top:663px;width:90px;text-align:right;letter-spacing:-0.3px">73 ms</div>
<div class="a" style="left:649px;top:665px;width:23px;height:9px;background:#fff;border:1px solid #c8c8c8;"></div>
<div class="a" style="left:671px;top:661px;width:38px;height:17px;border-radius:0 2px 2px 0;overflow:hidden"><div class="a" style="left:0px;top:0;width:33px;height:17px;background:#22c55d"></div><div class="a" style="left:33px;top:0;width:5px;height:17px;background:#2ea7ef"></div></div>
<svg class="ic" style="left:9px;top:688px" width="16" height="20"><rect x="1.3" y="0.95" width="13.4" height="17.4" fill="#fff" stroke="#b3b3b3" stroke-width="1.3"/><rect x="0.65" y="17.6" width="14.7" height="1.3" fill="#888"/><rect x="3.5" y="5" width="7" height="0.8" fill="#f0c4d0"/><rect x="3.5" y="6.5" width="7" height="0.8" fill="#c4d0f0"/><rect x="3.5" y="8.5" width="7" height="0.8" fill="#f0ccd8"/><rect x="3.5" y="10.5" width="7" height="0.8" fill="#d8d8f0"/><rect x="3.5" y="12" width="7" height="0.8" fill="#f0c8d4"/></svg>
<div class="t" style="left:31px;top:689px;"><span style="letter-spacing:-0.243px;">PrismjsMarkupTa</span><span style="letter-spacing:-0.3px">...</span></div>
<div class="t" style="left:167.5px;top:689px">200</div>
<div class="t" style="left:227px;top:689px;"><span style="">png</span></div>
<div class="t" style="left:285px;top:689px;"><span class="lnk" style="letter-spacing:-0.05px">sitedesign.</span><span style="letter-spacing:-0.3px">...</span></div>
<div class="t" style="left:381px;top:689px;"><span style="letter-spacing:-0.338px;">22.9 </span><span style="letter-spacing:-0.3px">...</span></div>
<div class="t" style="left:433px;top:689px;width:90px;text-align:right;letter-spacing:-0.3px">74 ms</div>
<div class="a" style="left:651px;top:691px;width:21px;height:9px;background:#fff;border:1px solid #c8c8c8;"></div>
<div class="a" style="left:671px;top:687px;width:38px;height:17px;border-radius:0 2px 2px 0;overflow:hidden"><div class="a" style="left:0px;top:0;width:35px;height:17px;background:#22c55d"></div><div class="a" style="left:35px;top:0;width:3px;height:17px;background:#2ea7ef"></div></div>
<svg class="ic" style="left:9px;top:714px" width="16" height="20"><rect x="1.3" y="0.95" width="13.4" height="17.4" fill="#fff" stroke="#b3b3b3" stroke-width="1.3"/><rect x="0.65" y="17.6" width="14.7" height="1.3" fill="#888"/></svg>
<div class="t" style="left:31px;top:715px;"><span style="letter-spacing:-0.109px;">website.ico</span></div>
<div class="t" style="left:167.5px;top:715px">200</div>
<div class="t" style="left:227px;top:715px;"><span style="">x-icon</span></div>
<div class="t oth" style="left:285px;top:715px">Other</div>
<div class="t" style="left:375px;top:715px;width:54px;text-align:right">319 B</div>
<div class="t" style="left:433px;top:715px;width:90px;text-align:right;letter-spacing:-0.3px">37 ms</div>
<div class="a" style="left:843px;top:713px;width:19px;height:17px;border-radius:0 2px 2px 0;overflow:hidden"><div class="a" style="left:0px;top:0;width:19px;height:17px;background:#22c55d"></div><div class="a" style="left:18px;top:0;width:1px;height:17px;background:#2ea7ef"></div></div>
<div class="a" style="left:633px;top:137px;width:1px;height:603px;background:rgba(0,0,0,0.09)"></div>
<div class="a" style="left:736px;top:137px;width:1px;height:603px;background:rgba(0,0,0,0.09)"></div>
<div class="a" style="left:839px;top:710px;width:4px;height:26px;background:#fff"></div>
<div class="a" style="left:802px;top:138px;width:1px;height:602px;background:#2566cc"></div>
<div class="a" style="left:801px;top:138px;width:1px;height:602px;background:rgba(37,102,204,0.3)"></div>
<div class="a" style="left:803px;top:138px;width:1px;height:602px;background:rgba(37,102,204,0.25)"></div>
<div class="a" style="left:841px;top:138px;width:1px;height:602px;background:#bc2f37"></div>
<div class="a" style="left:840px;top:138px;width:1px;height:602px;background:rgba(188,47,55,0.55)"></div>
<div class="a" style="left:842px;top:138px;width:1px;height:602px;background:rgba(188,47,55,0.4)"></div>
<div class="hl" style="left:5px;top:166px;width:874px;height:23px"></div>
<div class="hl" style="left:5px;top:270px;width:874px;height:23px"></div>
<div class="a" style="left:1px;top:740px;width:880px;height:1px;background:#cbcbcb"></div>
<div class="a" style="left:2px;top:741px;width:878px;height:39px;background:#f7f7f7"></div>
<div class="a" style="left:2px;top:780px;width:878px;height:1px;background:#e2e2e2"></div>
<div class="a" style="left:0;top:781px;width:882px;height:1px;background:#5b7d74"></div>
<div class="t" style="left:14px;top:752px;letter-spacing:-0.091px;">23 requests</div>
<div class="t" style="left:99px;top:752px;letter-spacing:-0.114px;">329 kB transferred</div>
<div class="t" style="left:229px;top:752px;letter-spacing:-0.283px;">325 kB resources</div>
<div class="t" style="left:349px;top:752px;letter-spacing:-0.234px;">Finish: 642 ms</div>
<div class="t" style="left:451px;top:752px;letter-spacing:-0.159px;">DOMContentLoaded: 525 ms</div>
<div class="t" style="left:652px;top:752px;letter-spacing:-0.220px;">Load: 602 ms</div>
</body></html>
